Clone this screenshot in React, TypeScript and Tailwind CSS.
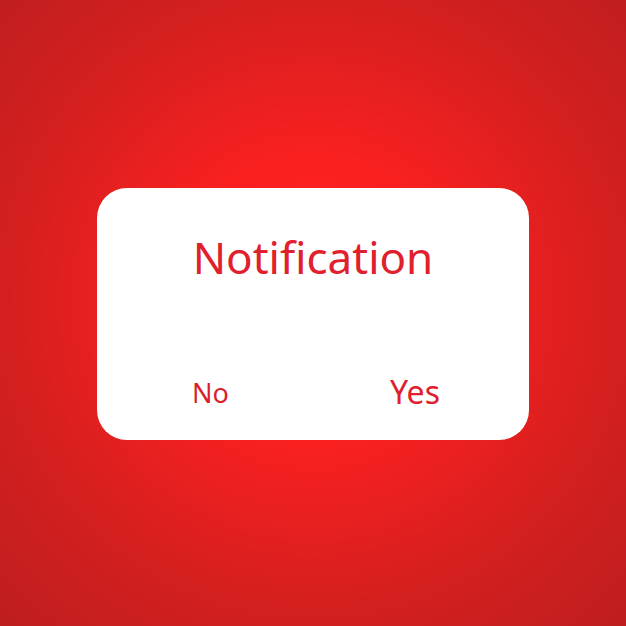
export default function App() {
  return (
    <div className="flex h-[626px] w-[626px] items-center justify-center bg-[radial-gradient(circle_at_50%_48%,#ff2121_0%,#fb2020_30%,#d41f1f_68%,#be1e1e_100%)] font-['Noto_Sans',sans-serif]">
      {/* dialog card */}
      <div className="mt-[1px] flex h-[252px] w-[432px] flex-col rounded-[30px] bg-white">
        <h1 className="mt-[41px] text-center text-[44px] leading-[56px] text-[#e0202c]">Notification</h1>
        <div className="mt-auto mb-[28px] flex items-end justify-between pl-[95px] pr-[89px]">
          <span className="mb-[1px] text-[27px] leading-[36px] text-[#d81f2a]">No</span>
          <span className="text-[32px] leading-[40px] text-[#e0202c]">Yes</span>
        </div>
      </div>
    </div>
  )
}
